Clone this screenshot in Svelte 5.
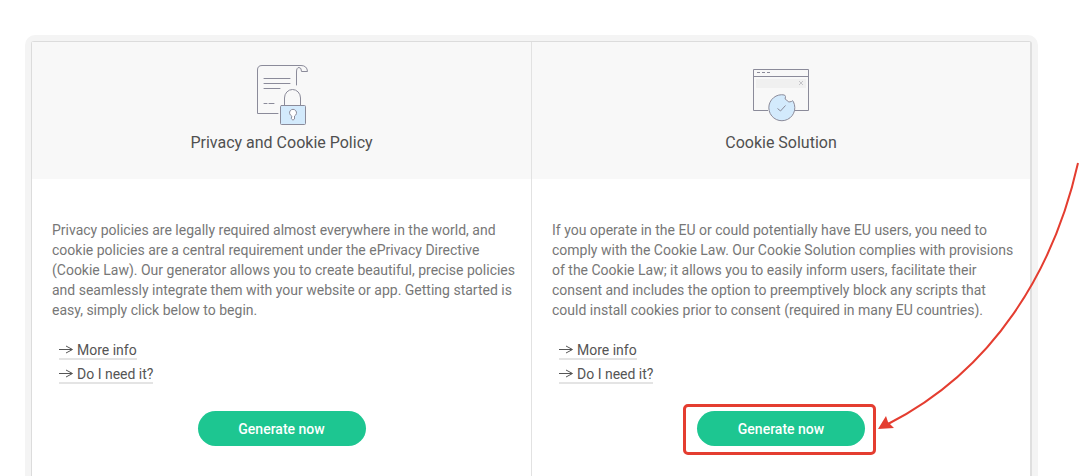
<script lang="ts">
  interface Product {
    id: string;
    title: string;
    lines: string[];
    highlighted: boolean;
  }

  const products: Product[] = [
    {
      id: "policy",
      title: "Privacy and Cookie Policy",
      lines: [
        "Privacy policies are legally required almost everywhere in the world, and",
        "cookie policies are a central requirement under the ePrivacy Directive",
        "(Cookie Law). Our generator allows you to create beautiful, precise policies",
        "and seamlessly integrate them with your website or app. Getting started is",
        "easy, simply click below to begin.",
      ],
      highlighted: false,
    },
    {
      id: "cookie",
      title: "Cookie Solution",
      lines: [
        "If you operate in the EU or could potentially have EU users, you need to",
        "comply with the Cookie Law. Our Cookie Solution complies with provisions",
        "of the Cookie Law; it allows you to easily inform users, facilitate their",
        "consent and includes the option to preemptively block any scripts that",
        "could install cookies prior to consent (required in many EU countries).",
      ],
      highlighted: true,
    },
  ];

  const links = ["More info", "Do I need it?"];
</script>

<main class="frame">
  <div class="card">
    {#each products as product (product.id)}
      <section class="product">
        <header class="product-header">
          {#if product.id === "policy"}
            <svg class="icon" width="61" height="62" viewBox="0 0 61 62" aria-hidden="true">
              <g fill="none" stroke="#8b8b9a" stroke-linecap="round" stroke-linejoin="round">
                <path d="M27 49.5H6.5V6Q6.5 1.500 11 1.500H50Q56 1.500 56.500 7.500H50.500Q50.500 3.500 48 3.500Q45.500 3.500 45.500 8V21" />
                <path d="M13 14.500H39M13 19.500H39M13 24.500H29M13 39.500H16M18 39.500H23" />
                <path d="M33.500 41V34A8 8.500 0 0 1 49.500 34V41" />
                <rect x="29.500" y="41.500" width="25" height="19" rx="1" fill="#d3eafc" />
                <path d="M40.500 52A3.500 3.500 0 1 1 43.500 52V55Q42 57.500 40.500 55Z" fill="#fff" />
              </g>
            </svg>
          {:else}
            <svg class="icon" width="60" height="62" viewBox="0 0 60 62" aria-hidden="true">
              <rect x="5" y="15" width="50" height="9" fill="#f0f0f0" />
              <g fill="none" stroke="#8b8b9a">
                <path d="M17 46.500H2.500V5.500H57.500V46.500H43M2.500 12.500H57.500" />
                <path d="M6 8.500H9M11 8.500H14M16 8.500H19" />
                <path d="M48 17L52 21M52 17L48 21" stroke="#c4c4c8" />
                <path d="M33.500 31A13 13 0 1 0 42.500 38Q41.500 35.500 40.500 37.500Q37.500 39 36 36.500Q33 35.500 34.500 32.500Z" fill="#d3eafc" />
                <path d="M26.500 44.500L29.500 47L34.500 41.500" />
              </g>
            </svg>
          {/if}
          <h2>{product.title}</h2>
        </header>

        <div class="product-body">
          <p>
            {#each product.lines as line}
              <span class="line">{line}</span>
            {/each}
          </p>

          <ul class="links">
            {#each links as label}
              <li>
                <a href="#{product.id}">
                  <svg width="14" height="9" viewBox="0 0 14 9" aria-hidden="true">
                    <path d="M0 4.500H13M7 1L13.500 4.500L7 8" fill="none" stroke="currentColor" />
                  </svg>
                  {label}
                </a>
              </li>
            {/each}
          </ul>

          <div class="action">
            <button type="button">Generate now</button>
            {#if product.highlighted}
              <span class="highlight"></span>
              <svg class="pointer" width="210" height="280" viewBox="0 0 210 280" aria-hidden="true">
                <path d="M204 8C180 115 120 215 14 269" fill="none" stroke="#e43d30" stroke-width="2" />
                <path d="M4 274L12 261L14 267L20 273Z" fill="#e43d30" />
              </svg>
            {/if}
          </div>
        </div>
      </section>
    {/each}
  </div>
</main>

<style>
  :global(body) {
    background: #fff;
    overflow: hidden;
  }

  .frame {
    box-sizing: border-box;
    display: flex;
    min-height: calc(100vh - 35px);
    margin: 35px 46px 0 25px;
    padding: 6px 6px 0;
    border-radius: 10px 10px 0 0;
    background: #f4f4f4;
    font-family: Roboto, "Liberation Sans", sans-serif;
  }

  .card {
    flex: 1;
    min-width: 0;
    display: grid;
    grid-template-columns: repeat(2, minmax(0, 1fr));
    border: 1px solid #dcdcdc;
    border-bottom: 0;
    border-right: 2px solid #dfdfdf;
    border-radius: 3px 3px 0 0;
    background: #fff;
  }

  .product + .product {
    border-left: 1px solid #e2e2e2;
  }

  .product-header {
    display: flex;
    flex-direction: column;
    align-items: center;
    height: 115px;
    padding-top: 22px;
    background: #f8f8f8;
  }

  .icon {
    display: block;
  }

  h2 {
    margin: 7px 0 0;
    font-size: 16px;
    font-weight: 400;
    line-height: 20px;
    color: #505050;
  }

  .product-body {
    padding: 41px 20px 30px;
    font-size: 14px;
    line-height: 20px;
  }

  p {
    margin: 0;
    color: #777;
  }

  .line {
    display: block;
    white-space: nowrap;
  }

  .links {
    display: flex;
    flex-direction: column;
    align-items: flex-start;
    gap: 4px;
    margin: 20px 0 0 7px;
    padding: 0;
    list-style: none;
  }

  .links li {
    display: flex;
  }

  .links a {
    display: flex;
    align-items: center;
    gap: 4px;
    box-sizing: border-box;
    height: 20px;
    padding-top: 1px;
    border-bottom: 2px solid #e4e4e4;
    color: #555;
    text-decoration: none;
  }

  .action {
    position: relative;
    width: 168px;
    margin: 27px auto 0;
  }

  button {
    display: block;
    width: 100%;
    height: 35px;
    padding: 0;
    border: 0;
    border-radius: 18px;
    background: #1dc691;
    color: #fff;
    font: 500 14px Roboto, "Liberation Sans", sans-serif;
    cursor: pointer;
  }

  .highlight {
    position: absolute;
    inset: -7px -11px -9px -14px;
    border: 3px solid #e43d30;
    border-radius: 5px;
    pointer-events: none;
  }

  .pointer {
    position: absolute;
    left: 177px;
    top: -256px;
    pointer-events: none;
  }
</style>
